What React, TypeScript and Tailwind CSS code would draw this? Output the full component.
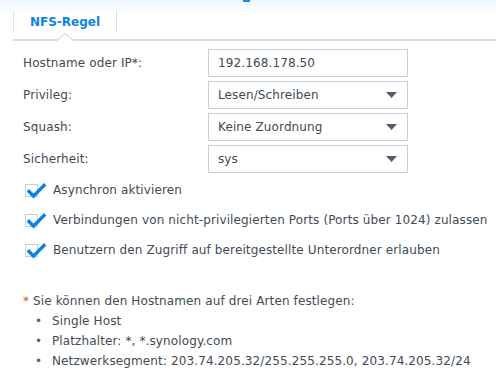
import React from "react";

const font = { fontFamily: '"DejaVu Sans", Verdana, sans-serif' };

function Caret() {
  return (
    <svg width="11" height="6" viewBox="0 0 11 6" className="shrink-0">
      <path d="M0 0 H11 L5.5 6 Z" fill="#525c68" />
    </svg>
  );
}

function Field({ value, select }: { value: string; select?: boolean }) {
  return (
    <div className="h-[28px] w-[200px] border border-[#c6d0da] bg-white flex items-center justify-between pl-[9px] pr-[10px] text-[12px] tracking-[0.12px] text-[#414b55]">
      <span>{value}</span>
      {select && <Caret />}
    </div>
  );
}

function Check({ label }: { label: string }) {
  return (
    <div className="flex items-center h-[30px] pl-[25px]">
      <div className="relative w-[13px] h-[13px] border border-[#c6d0da] bg-white shrink-0">
        <svg width="20" height="16" viewBox="0 0 20 16" className="absolute left-[1px] top-[-2px]">
          <path d="M2 8.5 L6.5 13 L17 2.5" fill="none" stroke="#0a84e3" strokeWidth="3.4" strokeLinecap="square" />
        </svg>
      </div>
      <span className="ml-[15px] text-[12px] tracking-[0.12px] text-[#414b55]">{label}</span>
    </div>
  );
}

export default function App() {
  const rows: { label: string; value: string; select?: boolean }[] = [
    { label: "Hostname oder IP*:", value: "192.168.178.50" },
    { label: "Privileg:", value: "Lesen/Schreiben", select: true },
    { label: "Squash:", value: "Keine Zuordnung", select: true },
    { label: "Sicherheit:", value: "sys", select: true },
  ];
  return (
    <div className="w-[496px] h-[385px] bg-white overflow-hidden relative" style={font}>
      <div className="absolute inset-x-0 top-0 h-[12px] bg-gradient-to-b from-[#edf5fd] to-white" />
      <div className="absolute left-[243px] top-0 w-[7px] h-[2px] bg-[#1a8ae6]" />
      {/* Tab bar */}
      <div className="relative pt-[10px] pl-[13px] h-[41px]">
        <div className="relative flex h-[23px]">
          <div className="w-[104px] border-l border-r border-[#dde3ea] flex items-center justify-center text-[12px] font-bold text-[#0a84e3]">
            NFS-Regel
          </div>
        </div>
        <div className="absolute left-[13px] right-0 bottom-0 h-[2px] bg-[#d9dcdf]" />
        <svg width="16" height="8" viewBox="0 0 16 8" className="absolute left-[57px] bottom-0">
          <path d="M0 8 L8 0.5 L16 8 Z" fill="white" />
          <path d="M0 7 L8 0.5 L16 7" fill="none" stroke="#d9dcdf" strokeWidth="1.2" />
        </svg>
      </div>
      {/* Form */}
      <div className="pt-[8px] pl-[23px] grid grid-cols-[185px_200px] gap-y-[4px]">
        {rows.map((r) => (
          <React.Fragment key={r.label}>
            <div className="h-[28px] flex items-center text-[12px] tracking-[0.12px] text-[#414b55]">{r.label}</div>
            <Field value={r.value} select={r.select} />
          </React.Fragment>
        ))}
      </div>
      <div className="pt-[2px]">
        <Check label="Asynchron aktivieren" />
        <Check label="Verbindungen von nicht-privilegierten Ports (Ports über 1024) zulassen" />
        <Check label="Benutzern den Zugriff auf bereitgestellte Unterordner erlauben" />
      </div>
      <div className="pt-[26px] pl-[23px] text-[12px] tracking-[0.12px] text-[#414b55] leading-[20px]">
        <div><span className="text-[#d0533f]">*</span> Sie können den Hostnamen auf drei Arten festlegen:</div>
        {["Single Host", "Platzhalter: *, *.synology.com", "Netzwerksegment: 203.74.205.32/255.255.255.0, 203.74.205.32/24"].map((t) => (
          <div key={t} className="flex items-center">
            <span className="w-[29px] pl-[12px] text-[#5a636d]">•</span>
            <span>{t}</span>
          </div>
        ))}
      </div>
    </div>
  );
}
